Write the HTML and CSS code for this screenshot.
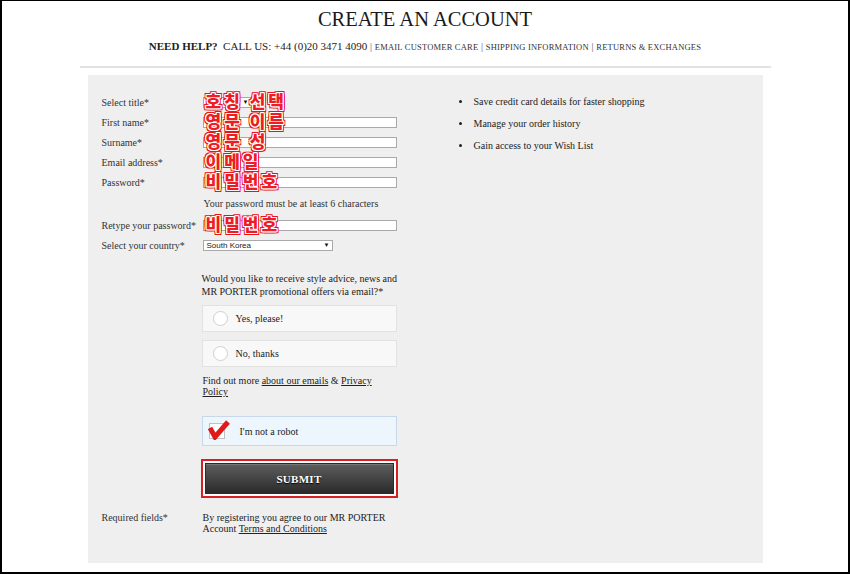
FILE: index.html
```html
<!DOCTYPE html>
<html>
<head>
	<title>Create an account</title>
	<link rel="stylesheet" href="styles.css">
</head>
<body>
	<div class="frame">
		<h1 class="title">CREATE AN ACCOUNT</h1>
		<div class="help">
			<b>NEED HELP?</b>&nbsp; CALL US: +44 (0)20 3471 4090 <span class="sep">|</span>
			<a class="small">EMAIL CUSTOMER CARE</a> <span class="sep">|</span>
			<a class="small">SHIPPING INFORMATION</a> <span class="sep">|</span>
			<a class="small">RETURNS &amp; EXCHANGES</a>
		</div>
		<div class="rule"></div>

		<div class="panel">
			<form class="form">
				<div class="row">
					<label class="label">Select title*</label>
					<div class="field">
						<span class="fake-select title-select"><span class="arrow">▼</span></span>
						<span class="note">호칭 선택</span>
					</div>
				</div>
				<div class="row">
					<label class="label">First name*</label>
					<div class="field">
						<input class="text" type="text">
						<span class="note">영문 이름</span>
					</div>
				</div>
				<div class="row">
					<label class="label">Surname*</label>
					<div class="field">
						<input class="text" type="text">
						<span class="note">영문 성</span>
					</div>
				</div>
				<div class="row">
					<label class="label">Email address*</label>
					<div class="field">
						<input class="text" type="text">
						<span class="note">이메일</span>
					</div>
				</div>
				<div class="row">
					<label class="label">Password*</label>
					<div class="field">
						<input class="text" type="password">
						<span class="note">비밀번호</span>
					</div>
				</div>
				<div class="row hint-row">
					<span class="label"></span>
					<div class="field hint">Your password must be at least 6 characters</div>
				</div>
				<div class="row">
					<label class="label">Retype your password*</label>
					<div class="field">
						<input class="text" type="password">
						<span class="note">비밀번호</span>
					</div>
				</div>
				<div class="row">
					<label class="label">Select your country*</label>
					<div class="field">
						<span class="fake-select country-select">South Korea<span class="arrow">▼</span></span>
					</div>
				</div>

				<div class="block">
					<p class="question">Would you like to receive style advice, news and<br>MR PORTER promotional offers via email?*</p>
					<div class="choice"><span class="circle"></span>Yes, please!</div>
					<div class="choice"><span class="circle"></span>No, thanks</div>
					<p class="more">Find out more <a>about our emails</a> &amp; <a>Privacy Policy</a></p>

					<div class="captcha">
						<span class="checkbox">
							<svg width="22" height="20" viewBox="0 0 22 20">
								<path d="M2 8 L7 17 L20 2" fill="none" stroke="#e01a1a" stroke-width="5" stroke-linejoin="miter"/>
							</svg>
						</span>
						I'm not a robot
					</div>

					<div class="submit-wrap">
						<button type="button" class="submit">SUBMIT</button>
					</div>
				</div>

				<div class="row foot">
					<span class="label">Required fields*</span>
					<p class="field terms">By registering you agree to our MR PORTER Account <a>Terms and Conditions</a></p>
				</div>
			</form>

			<ul class="perks">
				<li>Save credit card details for faster shopping</li>
				<li>Manage your order history</li>
				<li>Gain access to your Wish List</li>
			</ul>
		</div>
	</div>
</body>
</html>
```

FILE: styles.css
```css
html, body {
	margin: 0;
	background: #fff;
}

.frame {
	box-sizing: border-box;
	width: 850px;
	height: 574px;
	border: 2px solid #000;
	border-top-width: 1px;
	font-family: "Liberation Serif", "DejaVu Serif", serif;
	color: #333;
	overflow: hidden;
}

.title {
	margin: 6px 0 0;
	font-weight: normal;
	font-size: 20.5px;
	line-height: 24px;
	text-align: center;
	color: #1a1a1a;
}

.help {
	margin-top: 8px;
	text-align: center;
	font-size: 11px;
	line-height: 14px;
	color: #222;
}

.help b {
	font-weight: bold;
}

.help .small {
	font-size: 8.5px;
	letter-spacing: 0.2px;
	color: #333;
}

.help .sep {
	font-size: 10px;
	color: #555;
}

.rule {
	width: 691px;
	height: 2px;
	margin: 12px auto 0;
	background: #e2e2e2;
}

.panel {
	display: flex;
	width: 675px;
	height: 488px;
	margin: 7px auto 0;
	background: #efefef;
	box-sizing: border-box;
	padding: 17px 0 0 14px;
}

.form {
	width: 300px;
	font-size: 10px;
}

.row {
	display: flex;
	align-items: center;
	height: 20px;
}

.label {
	width: 101px;
	flex: none;
}

.field {
	position: relative;
	width: 195px;
}

.text {
	display: block;
	box-sizing: border-box;
	width: 194px;
	height: 11px;
	margin: 0;
	padding: 0;
	border: 1px solid #a9a9a9;
	background: #fff;
}

.fake-select {
	position: relative;
	display: block;
	box-sizing: border-box;
	height: 11px;
	border: 1px solid #a9a9a9;
	background: #fff;
	font-family: "Liberation Sans", Arial, sans-serif;
	font-size: 8px;
	line-height: 9px;
	padding-left: 3px;
	color: #222;
}

.title-select {
	width: 49px;
}

.country-select {
	width: 130px;
}

.arrow {
	position: absolute;
	right: 2px;
	top: 0;
	font-size: 6px;
	line-height: 9px;
	color: #111;
}

.note {
	position: absolute;
	left: 3px;
	top: -6px;
	font-family: "Noto Sans CJK KR", sans-serif;
	font-weight: 900;
	font-size: 17px;
	line-height: 20px;
	color: #ee1c24;
	letter-spacing: 3px;
	text-shadow:
		1px 0 0 #fff, -1px 0 0 #fff, 0 1px 0 #fff, 0 -1px 0 #fff,
		1px 1px 0 #fff, -1px -1px 0 #fff, 1px -1px 0 #fff, -1px 1px 0 #fff,
		2px 0 0 #e8141c, -2px 0 0 #e8141c, 0 2px 0 #e8141c, 0 -2px 0 #e8141c,
		2px 2px 0 #e8141c, -2px -2px 0 #e8141c, 2px -2px 0 #e8141c, -2px 2px 0 #e8141c;
	white-space: nowrap;
}

.hint-row {
	height: 23px;
}

.hint {
	padding-left: 1px;
}

.block {
	margin: 17px 0 0 100px;
	width: 195px;
}

.question {
	margin: 0 -10px 0 0;
	line-height: 13px;
	color: #222;
	white-space: nowrap;
}

.choice {
	display: flex;
	align-items: center;
	box-sizing: border-box;
	height: 27px;
	margin-top: 7px;
	padding-left: 10px;
	background: #f8f8f8;
	border: 1px solid #e2e2e2;
	color: #222;
}

.choice + .choice {
	margin-top: 8px;
}

.circle {
	width: 13px;
	height: 13px;
	margin-right: 8px;
	border: 1px solid #cfcfcf;
	border-radius: 50%;
	background: #fff;
}

.more {
	margin: 8px 0 0 1px;
	line-height: 11px;
	color: #222;
}

.more a, .terms a {
	text-decoration: underline;
}

.captcha {
	display: flex;
	align-items: center;
	box-sizing: border-box;
	height: 30px;
	margin-top: 19px;
	padding-left: 6px;
	background: #eef6fd;
	border: 1px solid #c7d8ec;
	color: #222;
}

.checkbox {
	position: relative;
	width: 14px;
	height: 14px;
	margin-right: 15px;
	border: 1px solid #c0c0c0;
	background: #fff;
}

.checkbox svg {
	position: absolute;
	left: -2px;
	top: -4px;
}

.submit-wrap {
	box-sizing: border-box;
	width: 197px;
	height: 39px;
	margin: 13px 0 0 -1px;
	padding: 2px;
	border: 2px solid #d71f26;
	background: #fff;
}

.submit {
	display: block;
	width: 100%;
	height: 100%;
	border: 1px solid #2a2a2a;
	box-shadow: inset 0 1px 0 #777;
	background: linear-gradient(#5e5e5e, #2a2a2a);
	color: #fff;
	font-family: "Liberation Serif", "DejaVu Serif", serif;
	font-weight: bold;
	font-size: 11px;
	text-shadow: 0 1px 1px #000;
	letter-spacing: 0.3px;
}

.foot {
	align-items: flex-start;
	height: auto;
	margin-top: 14px;
}

.foot .label {
	line-height: 11px;
}

.terms {
	margin: 0;
	line-height: 11px;
	color: #222;
}

.perks {
	margin: 0;
	padding: 4px 0 0 70px;
	font-size: 10px;
	color: #222;
}

.perks li {
	line-height: 12px;
	margin-bottom: 10px;
	padding-left: 2px;
}
```
